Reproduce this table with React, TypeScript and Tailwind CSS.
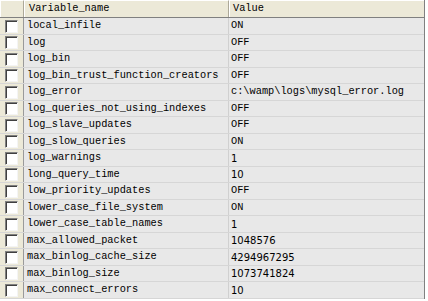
const rows: [string, string][] = [
  ["local_infile", "ON"],
  ["log", "OFF"],
  ["log_bin", "OFF"],
  ["log_bin_trust_function_creators", "OFF"],
  ["log_error", "c:\\wamp\\logs\\mysql_error.log"],
  ["log_queries_not_using_indexes", "OFF"],
  ["log_slave_updates", "OFF"],
  ["log_slow_queries", "ON"],
  ["log_warnings", "1"],
  ["long_query_time", "10"],
  ["low_priority_updates", "OFF"],
  ["lower_case_file_system", "ON"],
  ["lower_case_table_names", "1"],
  ["max_allowed_packet", "1048576"],
  ["max_binlog_cache_size", "4294967295"],
  ["max_binlog_size", "1073741824"],
  ["max_connect_errors", "10"],
];

const mono = "font-['Liberation_Mono','Courier_New',monospace] text-[10.3px] text-black";
const sans = "font-['DejaVu_Sans',Verdana,sans-serif] text-[10px] text-black";

function CheckBox() {
  return (
    <div className="w-[13px] h-[13px] bg-white border-t border-l border-[#808080] border-r border-b border-r-[#f4f4f4] border-b-[#f4f4f4]">
      <div className="w-full h-full border-t border-l border-[#404040] border-r-0 border-b-0" />
    </div>
  );
}

export default function App() {
  return (
    <div className="w-[428px] h-[301px] bg-white overflow-hidden select-none">
      <div className="w-[425px] bg-[#e8e8e8] border-r border-[#808080]">
        {/* header */}
        <div className="flex h-[18px] bg-[#ece9d8] border-b border-[#808080]">
          <div className="w-[24px] border-t border-l border-white border-r border-r-[#aca899]" />
          <div className="w-[205px] flex items-center pl-[4px] border-t border-l border-white border-r border-r-[#aca899]">
            <span className={mono}>Variable_name</span>
          </div>
          <div className="flex-1 flex items-center pl-[3px] border-t border-l border-white">
            <span className={mono}>Value</span>
          </div>
        </div>
        {rows.map(([name, value], i) => {
          const isNum = /^\d+$/.test(value);
          return (
            <div
              key={name}
              className={`flex border-b border-[#d6d6d6] ${i % 2 === 0 ? "h-[17px]" : "h-[16px]"}`}
            >
              <div className="w-[24px] flex items-center pl-[5px] bg-[#ece9d8] border-r border-[#9a9a9a]">
                <CheckBox />
              </div>
              <div className="w-[205px] flex items-center pl-[3px] border-r border-[#d0d0d0]">
                <span className={mono}>{name}</span>
              </div>
              <div className="flex-1 flex items-center pl-[2px]">
                <span className={isNum ? sans : mono}>{value}</span>
              </div>
            </div>
          );
        })}
      </div>
    </div>
  );
}
